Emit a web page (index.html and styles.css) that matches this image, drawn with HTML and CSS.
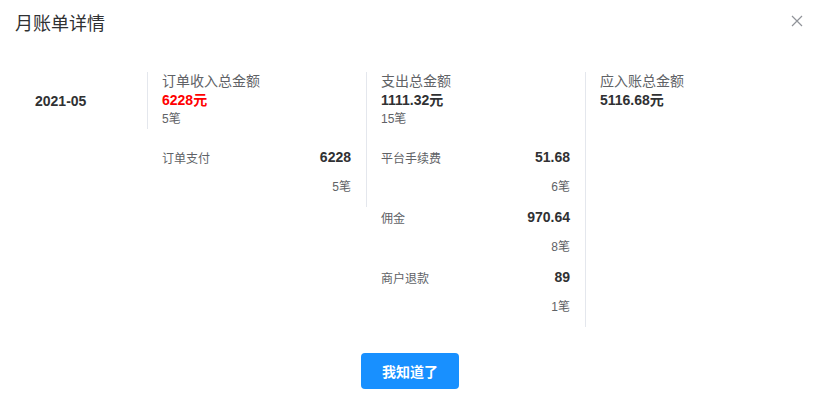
FILE: index.html
```html
<!DOCTYPE html>
<html lang="zh">
<head>
<meta charset="utf-8">
<title>月账单详情</title>
<link rel="stylesheet" href="styles.css">
</head>
<body>
<div class="dialog">
  <div class="header">
    <span class="title">月账单详情</span>
    <button class="close" aria-label="关闭">
      <svg width="12" height="12" viewBox="0 0 12 12"><path d="M1 1L11 11M11 1L1 11" stroke="#909399" stroke-width="1.2" fill="none"/></svg>
    </button>
  </div>
  <div class="body">
    <div class="date-col">2021-05</div>
    <div class="col">
      <div class="col-head">
        <div class="head-title">订单收入总金额</div>
        <div class="head-amount red">6228元</div>
        <div class="head-count">5笔</div>
      </div>
      <div class="items">
        <div class="item">
          <div class="item-row"><span class="label">订单支付</span><span class="value">6228</span></div>
          <div class="item-count">5笔</div>
        </div>
      </div>
    </div>
    <div class="col">
      <div class="col-head">
        <div class="head-title">支出总金额</div>
        <div class="head-amount">1111.32元</div>
        <div class="head-count">15笔</div>
      </div>
      <div class="items">
        <div class="item">
          <div class="item-row"><span class="label">平台手续费</span><span class="value">51.68</span></div>
          <div class="item-count">6笔</div>
        </div>
        <div class="item">
          <div class="item-row"><span class="label">佣金</span><span class="value">970.64</span></div>
          <div class="item-count">8笔</div>
        </div>
        <div class="item">
          <div class="item-row"><span class="label">商户退款</span><span class="value">89</span></div>
          <div class="item-count">1笔</div>
        </div>
      </div>
    </div>
    <div class="col last">
      <div class="col-head">
        <div class="head-title">应入账总金额</div>
        <div class="head-amount">5116.68元</div>
      </div>
    </div>
  </div>
  <div class="footer">
    <button class="primary">我知道了</button>
  </div>
</div>
</body>
</html>
```
FILE: styles.css
```css
* { box-sizing: border-box; }
html, body { margin: 0; padding: 0; background: #fff; }
body {
  font-family: "Liberation Sans", Arial, "Noto Sans CJK SC", sans-serif;
  color: #606266;
}
.dialog { width: 817px; height: 394px; position: relative; }
.header { padding: 12px 15px 0; height: 36px; }
.title { font-size: 18px; line-height: 24px; color: #303133; }
.close {
  position: absolute; top: 15px; right: 14px;
  width: 12px; height: 12px; padding: 0; border: 0; background: none;
  display: block; cursor: pointer;
}
.close svg { display: block; }
.body {
  display: flex; align-items: flex-start;
  padding: 36px 20px 0;
}
.date-col {
  width: 128px; height: 57px;
  padding-left: 15px;
  border-right: 1px solid #e4e7ed;
  display: flex; align-items: center;
  font-size: 14px; font-weight: bold; color: #303133;
}
.col {
  width: 219px;
  padding: 0 15px 5px 14px;
  border-right: 1px solid #e4e7ed;
}
.col.last { border-right: 0; flex: 1; }
.col-head { line-height: 19px; }
.head-title { font-size: 14px; color: #606266; }
.head-amount { font-size: 14px; font-weight: bold; color: #303133; }
.head-amount.red { color: #ff0000; }
.head-count { font-size: 12px; color: #606266; }
.items { margin-top: 13px; }
.item-row {
  display: flex; justify-content: space-between; align-items: center;
  height: 30px;
}
.label { font-size: 12px; color: #606266; }
.value { font-size: 14px; font-weight: bold; color: #303133; }
.item-count { text-align: right; font-size: 12px; line-height: 30px; color: #606266; }
.footer { display: flex; justify-content: center; padding-top: 26px; padding-left: 3px; }
.primary {
  width: 98px; height: 36px;
  border: 0; border-radius: 4px;
  background: #1890ff; color: #fff;
  font-family: "Liberation Sans", Arial, "Noto Sans CJK SC", sans-serif;
  font-size: 14px; font-weight: bold;
  padding: 0; cursor: pointer;
}
```
